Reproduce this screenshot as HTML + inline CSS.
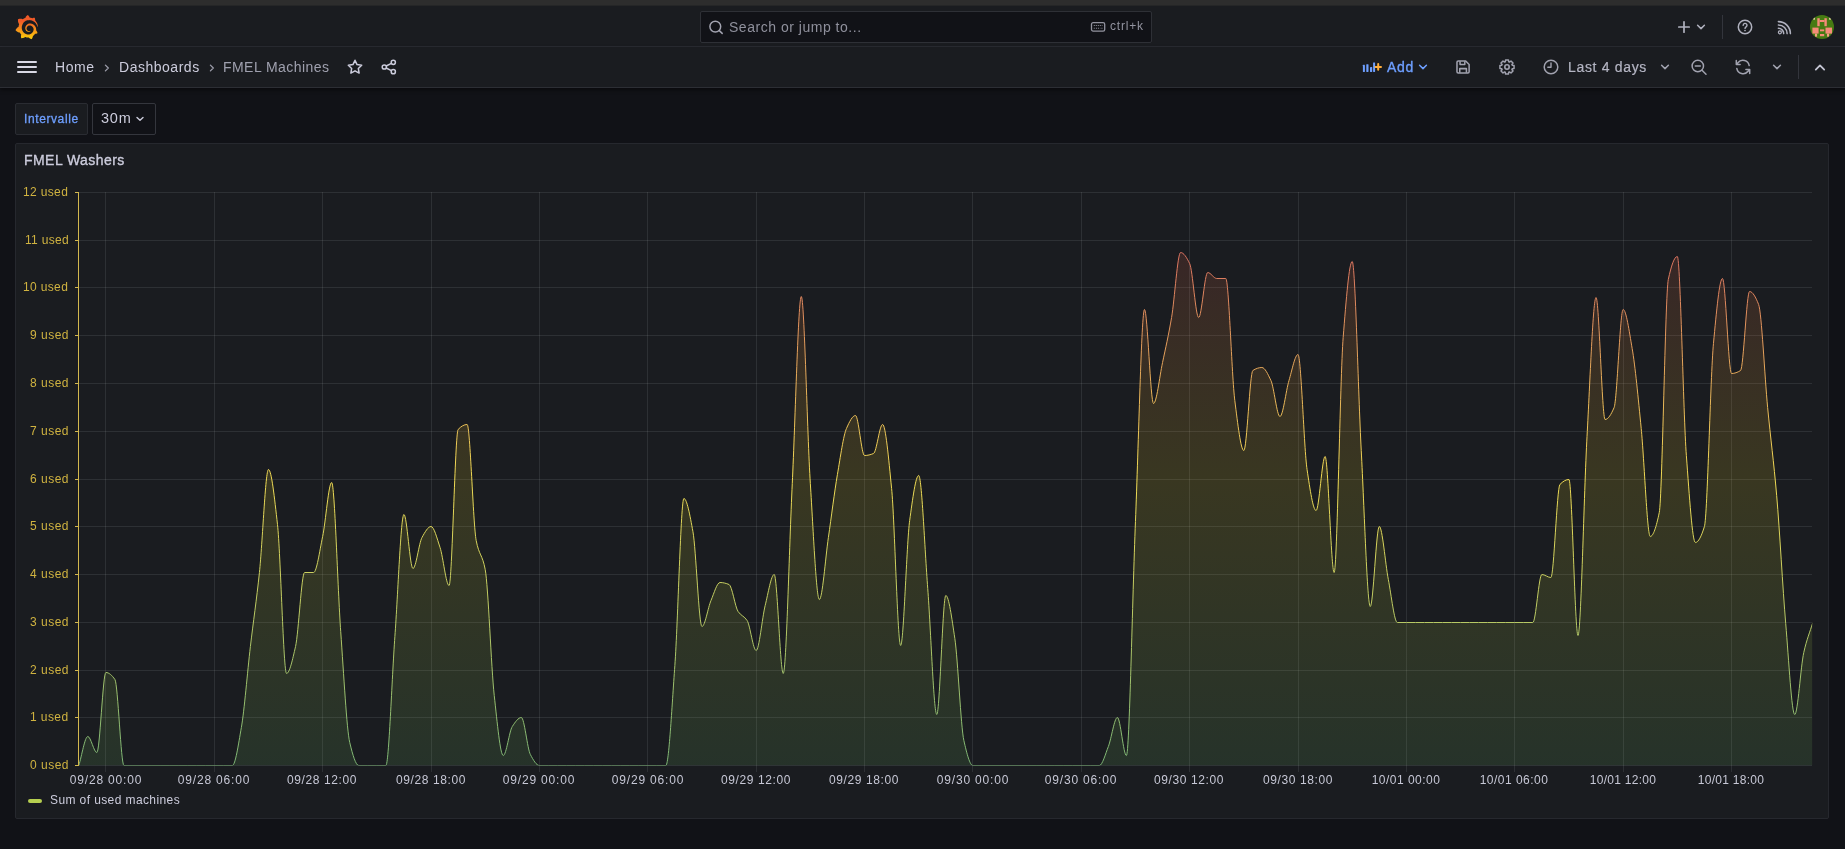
<!DOCTYPE html><html><head><meta charset="utf-8"><title>FMEL Machines - Dashboards - Grafana</title><style>
*{box-sizing:border-box;margin:0;padding:0}
html,body{width:1845px;height:849px;overflow:hidden;background:#111217;font-family:"Liberation Sans",sans-serif;color:#ccccdc}
.abs{position:absolute}
.t{position:absolute;white-space:nowrap;line-height:1;will-change:transform}
svg{position:absolute;overflow:visible}
.ic{fill:none;stroke:#ccccdc;stroke-width:1.6;stroke-linecap:round;stroke-linejoin:round}
</style></head><body>
<div class="abs" style="left:0;top:0;width:1845px;height:6px;background:#2d2d2d"></div>
<div class="abs" style="left:0;top:5px;width:1845px;height:1px;background:#252627"></div>
<div class="abs" style="left:0;top:6px;width:1845px;height:41px;background:#1a1c20;border-bottom:1px solid #2a2c32"></div>
<div class="abs" style="left:0;top:47px;width:1845px;height:41px;background:#1a1c20;border-bottom:1px solid #2c2e34;box-shadow:0 2px 4px rgba(0,0,0,.45)"></div>
<svg style="left:14.8px;top:14.7px" width="23.3" height="24.3" viewBox="0 0 351 365"><defs><linearGradient id="lg" x1="175.5" y1="445" x2="175.5" y2="90" gradientUnits="userSpaceOnUse"><stop offset="0" stop-color="#fff100"/><stop offset="1" stop-color="#f05a28"/></linearGradient></defs><path fill="url(#lg)" d="M342 161.200c-.600-6.100-1.600-13.100-3.600-20.900-2-7.700-5-16.200-9.400-25-4.400-8.800-10.100-17.900-17.500-26.800-2.900-3.500-6.100-6.900-9.500-10.200 5.100-20.300-6.200-37.900-6.200-37.900-19.500-1.200-31.900 6.100-36.500 9.400-.8-.3-1.500-.7-2.300-1-3.300-1.300-6.700-2.600-10.300-3.700-3.500-1.100-7.100-2.100-10.800-3-3.700-.9-7.400-1.600-11.200-2.200-.7-.1-1.300-.2-2-.3-8.500-27.200-32.900-38.600-32.900-38.600-27.300 17.300-32.400 41.500-32.400 41.500s-.1.500-.3 1.400c-1.500.4-3 .9-4.500 1.300-2.100.6-4.200 1.400-6.200 2.200-2.100.8-4.100 1.600-6.200 2.500-4.100 1.800-8.200 3.800-12.200 6-3.900 2.200-7.700 4.600-11.400 7.100-.5-.2-1-.4-1-.4-37.800-14.400-71.300 2.900-71.300 2.900-3.100 40.200 15.100 65.500 18.700 70.100-.9 2.500-1.700 5-2.500 7.500-2.800 9.100-4.900 18.400-6.200 28.100-.2 1.400-.4 2.800-.5 4.200C18.800 192.700 8.500 228 8.500 228c29.100 33.500 63.100 35.600 63.100 35.600 0 0 .1-.1.100-.1 4.300 7.700 9.300 15 14.900 21.900 2.400 2.900 4.800 5.600 7.400 8.300-10.600 30.400 1.500 55.600 1.500 55.600 32.400 1.200 53.700-14.200 58.200-17.700 3.200 1.100 6.500 2.100 9.800 2.900 10 2.600 20.200 4.100 30.400 4.500 2.500.1 5.100.2 7.600.1h1.200l.8 0 1.600 0 1.600-.1 0 .1c15.300 21.800 42.100 24.900 42.100 24.900 19.100-20.100 20.200-40.100 20.200-44.400l0 0c0 0 0-.1 0-.3 0-.4 0-.6 0-.6l0 0c0-.3 0-.6 0-.9 4-2.800 7.800-5.800 11.400-9.100 7.600-6.900 14.300-14.800 19.900-23.300.5-.8 1-1.600 1.500-2.400 21.600 1.200 36.900-13.400 36.900-13.400-3.600-22.500-16.400-33.500-19.100-35.600l0 0c0 0-.1-.1-.3-.2-.2-.1-.2-.2-.2-.2 0 0 0 0 0 0-.1-.1-.3-.2-.5-.3.100-1.400.2-2.700.3-4.100.2-2.400.2-4.900.2-7.300v-1.800l0-.9 0-.5c0-.6 0-.4 0-.6l-.1-1.500-.1-2c0-.7-.1-1.300-.2-1.900-.1-.6-.1-1.300-.2-1.900l-.2-1.900-.3-1.900c-.4-2.500-.8-4.900-1.400-7.400-2.300-9.700-6.100-18.900-11-27.200-5-8.300-11.200-15.600-18.300-21.800-7-6.200-14.900-11.200-23.100-14.900-8.300-3.700-16.900-6.100-25.500-7.200-4.300-.6-8.600-.8-12.900-.7l-1.600 0h-.4c-.1 0-.6 0-.5 0l-.7 0-1.600.1c-.6 0-1.200.1-1.700.1-2.200.2-4.400.5-6.500.9-8.600 1.600-16.700 4.700-23.800 9-7.100 4.300-13.300 9.600-18.300 15.600-5 6-8.900 12.700-11.600 19.600-2.700 6.900-4.200 14.100-4.600 21-.1 1.700-.1 3.500-.1 5.200 0 .4 0 .9 0 1.300l.1 1.400c.1.800.1 1.700.2 2.500.3 3.500 1 6.900 1.900 10.100 1.900 6.500 4.900 12.400 8.600 17.400 3.700 5 8.200 9.100 12.900 12.400 4.700 3.200 9.800 5.500 14.800 7 5 1.500 10 2.100 14.700 2.100.6 0 1.200 0 1.700 0 .3 0 .6 0 .9 0 .3 0 .6 0 .9-.1.5 0 1-.1 1.500-.1.1 0 .3 0 .4-.1l.5-.1c.3 0 .6-.1.900-.1.600-.1 1.100-.2 1.700-.3.600-.1 1.100-.2 1.600-.4 1.100-.2 2.100-.600 3.100-.9 2-.700 4-1.500 5.700-2.400 1.800-.9 3.400-2 5-3 .4-.3.900-.600 1.300-1 1.600-1.300 1.900-3.700.600-5.300-1.100-1.400-3.100-1.800-4.700-.9-.4.2-.8.400-1.200.6-1.400.7-2.800 1.300-4.300 1.800-1.500.5-3.100.9-4.700 1.200-.8.1-1.600.2-2.500.3-.4 0-.8.100-1.300.1-.4 0-.9 0-1.200 0-.4 0-.8 0-1.200 0-.5 0-1 0-1.500-.1 0 0-.3 0-.1 0l-.2 0-.3 0c-.2 0-.5 0-.7-.1-.5-.1-.9-.1-1.400-.2-3.700-.5-7.400-1.600-10.900-3.200-3.600-1.600-7-3.800-10.100-6.600-3.100-2.800-5.800-6.100-7.900-9.900-2.100-3.800-3.600-8-4.300-12.400-.3-2.200-.5-4.500-.4-6.700 0-.6.100-1.200.1-1.800 0 .2 0-.1 0-.1l0-.2 0-.5c0-.3.100-.6.100-.9.100-1.200.3-2.400.5-3.600 1.700-9.600 6.500-19 13.900-26.100 1.900-1.800 3.900-3.400 6-4.900 2.100-1.500 4.400-2.800 6.800-3.900 2.400-1.100 4.800-2 7.400-2.700 2.500-.7 5.100-1.100 7.800-1.400 1.300-.1 2.600-.2 4-.2.400 0 .6 0 .9 0l1.100 0 .7 0c.3 0 0 0 .1 0l.3 0 1.100.1c2.900.2 5.700.6 8.500 1.300 5.600 1.200 11.100 3.300 16.200 6.100 10.200 5.700 18.900 14.500 24.200 25.100 2.700 5.300 4.600 11 5.500 16.900.2 1.500.4 3 .5 4.500l.1 1.100.1 1.100c0 .4 0 .8 0 1.100 0 .4 0 .8 0 1.100v1l0 1.100c0 .7-.1 1.900-.1 2.600-.1 1.600-.3 3.300-.5 4.900-.2 1.600-.5 3.200-.8 4.800-.3 1.600-.7 3.200-1.100 4.700-.8 3.100-1.800 6.200-3 9.300-2.400 6-5.600 11.800-9.400 17.100-7.700 10.600-18.200 19.200-30.200 24.700-6 2.700-12.300 4.700-18.800 5.700-3.200.6-6.500.9-9.800 1l-.6 0h-.5l-1.100 0h-1.600-.8c.4 0-.1 0-.1 0l-.3 0c-1.800 0-3.500-.1-5.300-.3-7-.5-13.900-1.800-20.700-3.700-6.700-1.900-13.200-4.600-19.400-7.800-12.300-6.600-23.400-15.600-32-26.500-4.300-5.400-8.100-11.300-11.200-17.400-3.100-6.100-5.600-12.600-7.400-19.100-1.800-6.600-2.900-13.300-3.400-20.100l-.1-1.300 0-.3 0-.3 0-.6 0-1.100 0-.3 0-.4 0-.8 0-1.600 0-.3c0 0 0 .1 0-.1l0-.6c0-.8 0-1.700 0-2.500.1-3.300.4-6.800.8-10.200.4-3.400 1-6.900 1.700-10.300.7-3.400 1.500-6.800 2.500-10.200 1.900-6.700 4.300-13.200 7.100-19.300 5.700-12.200 13.100-23.100 22-31.800 2.200-2.200 4.500-4.200 6.900-6.200 2.400-1.900 4.900-3.700 7.500-5.400 2.500-1.700 5.200-3.200 7.900-4.600 1.300-.7 2.700-1.400 4.100-2 .7-.3 1.400-.6 2.100-.9.700-.3 1.400-.6 2.100-.9 2.800-1.200 5.700-2.200 8.700-3.100.7-.2 1.500-.4 2.200-.7.700-.2 1.500-.4 2.200-.6 1.500-.4 3-.8 4.500-1.100.7-.2 1.500-.3 2.300-.5.800-.2 1.500-.3 2.300-.5.800-.1 1.500-.3 2.300-.4l1.100-.2 1.200-.2c.8-.1 1.500-.2 2.300-.3.900-.1 1.700-.2 2.600-.3.700-.1 1.900-.2 2.600-.3.500-.1 1.100-.1 1.600-.2l1.100-.1.500-.1.600 0c.9-.1 1.700-.1 2.600-.2l1.300-.1c0 0 .5 0 .1 0l.3 0 .6 0c.7 0 1.500-.1 2.200-.1 2.900-.1 5.900-.1 8.800 0 5.800.2 11.500.9 17 1.900 11.100 2.100 21.500 5.600 31 10.300 9.500 4.600 17.900 10.300 25.300 16.500.5.400.9.800 1.400 1.200.4.400.9.800 1.300 1.200.9.800 1.700 1.600 2.600 2.400.9.800 1.700 1.600 2.500 2.400.8.800 1.600 1.600 2.400 2.500 3.100 3.300 6 6.600 8.600 10 5.200 6.700 9.400 13.500 12.700 19.900.2.400.4.800.6 1.200.2.400.4.800.6 1.200.4.800.8 1.600 1.100 2.400.4.800.7 1.500 1.100 2.300.3.800.7 1.500 1 2.300 1.200 3 2.400 5.900 3.300 8.600 1.500 4.400 2.600 8.300 3.500 11.700.3 1.400 1.600 2.300 3 2.100 1.500-.1 2.600-1.300 2.600-2.800C342.600 170.400 342.500 166.100 342 161.200z"/></svg>
<div class="abs" style="left:700px;top:11px;width:452px;height:32px;background:#111217;border:1px solid #2e3036;border-radius:2px"></div>
<svg style="left:708px;top:19px" width="16" height="16" viewBox="0 0 16 16"><circle cx="7.3" cy="7.6" r="5.4" fill="none" stroke="#a2a3b0" stroke-width="1.5"/><path d="M11.3 11.6L14.2 14.4" stroke="#a2a3b0" stroke-width="1.5" stroke-linecap="round"/></svg>
<div class="t" id="t_search" style="left:729.2px;top:19.6px;font-size:14px;color:#8f909c;letter-spacing:0.52px">Search or jump to...</div>
<svg style="left:1090px;top:21px" width="16" height="12" viewBox="0 0 16 12"><rect x="1.500" y="1.700" width="13.200" height="8.400" rx="1.600" fill="none" stroke="#92939f" stroke-width="1.3"/><path d="M3.800 4.500h8.600M3.800 7.300h.9M5.900 7.300h4.400M11.500 7.300h.9" stroke="#92939f" stroke-width="1.1" stroke-dasharray="1 1"/></svg>
<div class="t" id="t_ctrlk" style="left:1110.300px;top:20px;font-size:12px;color:#92939f;letter-spacing:0.8px">ctrl+k</div>
<svg style="left:1676px;top:19px" width="16" height="16" viewBox="0 0 16 16"><path d="M8 2.800v10.400M2.800 8h10.400" stroke="#b0b1be" stroke-width="1.7" stroke-linecap="round"/></svg>
<svg style="left:1696px;top:23px" width="10" height="8" viewBox="0 0 10 8"><path d="M1.6 2.2L5 5.6L8.4 2.2" fill="none" stroke="#b0b1be" stroke-width="1.5" stroke-linecap="round" stroke-linejoin="round"/></svg>
<div class="abs" style="left:1722px;top:15px;width:1px;height:24px;background:#33353c"></div>
<svg style="left:1736px;top:18px" width="18" height="18" viewBox="0 0 18 18"><circle cx="9" cy="9" r="6.7" fill="none" stroke="#b0b1be" stroke-width="1.5"/><path d="M7.2 7.4a1.9 1.9 0 1 1 2.9 1.5c-.7.45-1.05.8-1.05 1.5" fill="none" stroke="#b0b1be" stroke-width="1.4" stroke-linecap="round"/><circle cx="9" cy="12.5" r=".85" fill="#b0b1be"/></svg>
<svg style="left:1775px;top:19px" width="18" height="18" viewBox="1775 19 18 18"><circle cx="1779.900" cy="32.300" r="1.500" fill="none" stroke="#b0b1be" stroke-width="1.3"/><path d="M1778.4 28.300a5.300 5.300 0 0 1 5.300 5.300M1778.4 24.900a8.700 8.700 0 0 1 8.700 8.700M1778.4 21.600a12 12 0 0 1 12 12" fill="none" stroke="#b0b1be" stroke-width="1.55" stroke-linecap="round"/></svg>
<svg style="left:1810px;top:15px" width="24" height="24" viewBox="1810 15 24 24"><defs><clipPath id="avc"><circle cx="1822" cy="27" r="12"/></clipPath></defs><g clip-path="url(#avc)"><rect x="1810" y="15" width="24" height="24" fill="#467a12"/><rect x="1817.3" y="18.2" width="2.4" height="8.0" fill="#f58b78"/><rect x="1824.4" y="18.2" width="2.4" height="8.0" fill="#f58b78"/><rect x="1819.6" y="20.0" width="4.9" height="2.0" fill="#f58b78"/><rect x="1812.4" y="27.6" width="6.2" height="6.0" fill="#f58b78"/><rect x="1825.5" y="27.6" width="6.5" height="6.0" fill="#f58b78"/><rect x="1820.0" y="29.4" width="4.2" height="1.9" fill="#f58b78"/><rect x="1820.0" y="34.0" width="4.2" height="2.2" fill="#f58b78"/><rect x="1815.0" y="33.6" width="2.1" height="3.1" fill="#f2a080"/><rect x="1827.0" y="33.6" width="2.1" height="3.1" fill="#f2a080"/><rect x="1813.2" y="17.4" width="1.8" height="2.3" fill="#d8c89a"/><rect x="1829.0" y="17.4" width="2.0" height="2.3" fill="#d8c89a"/></g></svg>
<div class="abs" style="left:17px;top:61px;width:20px;height:2px;background:#d8d8e4;border-radius:1px"></div>
<div class="abs" style="left:17px;top:66px;width:20px;height:2px;background:#d8d8e4;border-radius:1px"></div>
<div class="abs" style="left:17px;top:71px;width:20px;height:2px;background:#d8d8e4;border-radius:1px"></div>
<div class="t" id="t_home" style="left:55px;top:60px;font-size:14px;color:#ccccdc;letter-spacing:0.6px">Home</div>
<svg style="left:103.3px;top:63.4px" width="8" height="10" viewBox="0 0 8 10"><path d="M2.4 2.100L5.300 5L2.4 7.900" fill="none" stroke="#9c9daa" stroke-width="1.3" stroke-linecap="round" stroke-linejoin="round"/></svg>
<div class="t" id="t_dash" style="left:119.2px;top:60px;font-size:14px;color:#ccccdc;letter-spacing:0.52px">Dashboards</div>
<svg style="left:208.3px;top:63.4px" width="8" height="10" viewBox="0 0 8 10"><path d="M2.4 2.100L5.300 5L2.4 7.900" fill="none" stroke="#9c9daa" stroke-width="1.3" stroke-linecap="round" stroke-linejoin="round"/></svg>
<div class="t" id="t_fmel" style="left:222.6px;top:60px;font-size:14px;color:#9fa0ae;letter-spacing:0.45px">FMEL Machines</div>
<svg style="left:346px;top:58px" width="18" height="18" viewBox="0 0 18 18"><path d="M9 2.300l2.050 4.250 4.650.65-3.380 3.250.82 4.600L9 12.850l-4.140 2.200.82-4.600L2.300 7.200l4.650-.65z" fill="none" stroke="#ccccdc" stroke-width="1.5" stroke-linejoin="round"/></svg>
<svg style="left:380px;top:58px" width="18" height="18" viewBox="0 0 18 18"><g fill="none" stroke="#ccccdc" stroke-width="1.5"><circle cx="13.3" cy="4.300" r="2.1"/><circle cx="4.300" cy="9" r="2.1"/><circle cx="13.3" cy="13.7" r="2.1"/><path d="M6.200 8l5.200-2.700M6.200 10l5.200 2.700"/></g></svg>
<svg style="left:1360px;top:60px" width="24" height="14" viewBox="1360 60 24 14"><g fill="#6e9fff"><rect x="1362.9" y="64.8" width="2" height="7.1" rx=".4"/><rect x="1366.300" y="64.300" width="2.2" height="7.6" rx=".4"/><rect x="1370" y="67.100" width="2.2" height="4.800" rx=".4"/><rect x="1373.100" y="62.4" width="2" height="9.5" rx=".4"/></g><path d="M1378.200 64.100v5.600M1375.400 66.900h5.600" stroke="#ffad3a" stroke-width="2" stroke-linecap="round"/></svg>
<div class="t" id="t_add" style="left:1386.6px;top:60px;font-size:14px;color:#6e9fff;-webkit-text-stroke:0.35px #6e9fff;letter-spacing:0.75px">Add</div>
<svg style="left:1418px;top:63px" width="10" height="8" viewBox="0 0 10 8"><path d="M1.6 2.2L5 5.6L8.4 2.2" fill="none" stroke="#6e9fff" stroke-width="1.5" stroke-linecap="round" stroke-linejoin="round"/></svg>
<svg style="left:1454.900px;top:59px" width="16.200" height="16.200" viewBox="0 0 18 18"><g fill="none" stroke="#a1a2af" stroke-width="1.7" stroke-linejoin="round"><path d="M3.600 2.300h8.300l3.800 3.800v8.100a1.400 1.400 0 0 1-1.400 1.400H3.600a1.400 1.400 0 0 1-1.400-1.400V3.700a1.400 1.400 0 0 1 1.400-1.400z"/><path d="M5.600 2.500v3.600h5.300V2.500M5.300 15.400v-4.700h7.400v4.700"/></g></svg>
<svg style="left:1498px;top:58px" width="18" height="18" viewBox="0 0 18 18"><path d="M16.06 7.57L16.06 10.43L14.22 10.73L13.92 11.47L15.00 12.98L12.98 15.00L11.47 13.92L10.73 14.22L10.43 16.06L7.57 16.06L7.27 14.22L6.53 13.92L5.02 15.00L3.00 12.98L4.08 11.47L3.78 10.73L1.94 10.43L1.94 7.57L3.78 7.27L4.08 6.53L3.00 5.02L5.02 3.00L6.53 4.08L7.27 3.78L7.57 1.94L10.43 1.94L10.73 3.78L11.47 4.08L12.98 3.00L15.00 5.02L13.92 6.53L14.22 7.27Z" fill="none" stroke="#a1a2af" stroke-width="1.5" stroke-linejoin="round"/><circle cx="9" cy="9" r="2.2" fill="none" stroke="#a1a2af" stroke-width="1.6"/></svg>
<svg style="left:1542px;top:58px" width="18" height="18" viewBox="0 0 18 18"><circle cx="9" cy="9" r="6.8" fill="none" stroke="#a1a2af" stroke-width="1.5"/><path d="M9 5v4.200H5.800" fill="none" stroke="#a1a2af" stroke-width="1.4" stroke-linecap="round" stroke-linejoin="round"/></svg>
<div class="t" id="t_last" style="left:1568px;top:60.3px;font-size:14px;color:#b4b5c3;-webkit-text-stroke:0.2px #b4b5c3;letter-spacing:0.67px">Last 4 days</div>
<svg style="left:1660px;top:63px" width="10" height="8" viewBox="0 0 10 8"><path d="M1.6 2.2L5 5.6L8.4 2.2" fill="none" stroke="#a1a2af" stroke-width="1.5" stroke-linecap="round" stroke-linejoin="round"/></svg>
<svg style="left:1690px;top:58px" width="18" height="18" viewBox="0 0 18 18"><circle cx="7.8" cy="8" r="5.7" fill="none" stroke="#a1a2af" stroke-width="1.5"/><path d="M5.300 8h5M12 12.200l4 4" fill="none" stroke="#a1a2af" stroke-width="1.5" stroke-linecap="round"/></svg>
<svg style="left:1734px;top:58px" width="18" height="18" viewBox="0 0 18 18"><g fill="none" stroke="#a1a2af" stroke-width="1.5" stroke-linecap="round" stroke-linejoin="round"><path d="M15.2 7.6A6.400 6.400 0 0 0 3.900 4.700L2.600 6.200M2.300 2.600v3.800h3.800"/><path d="M2.800 10.400a6.400 6.400 0 0 0 11.300 2.900l1.300-1.500M15.700 15.400v-3.800h-3.800"/></g></svg>
<svg style="left:1772px;top:63px" width="10" height="8" viewBox="0 0 10 8"><path d="M1.6 2.2L5 5.6L8.4 2.2" fill="none" stroke="#a1a2af" stroke-width="1.5" stroke-linecap="round" stroke-linejoin="round"/></svg>
<div class="abs" style="left:1798px;top:55px;width:1px;height:24px;background:#33353c"></div>
<svg style="left:1814px;top:63px" width="12" height="9" viewBox="0 0 12 9"><path d="M1.800 6.600L6 2.400L10.200 6.600" fill="none" stroke="#c4c5d3" stroke-width="1.8" stroke-linecap="round" stroke-linejoin="round"/></svg>
<div class="abs" style="left:15px;top:103px;width:73px;height:32px;background:#1a1c20;border:1px solid #2a2c32;border-radius:2px"></div>
<div class="t" id="t_interv" style="left:24px;top:113px;font-size:12px;color:#6e9fff;-webkit-text-stroke:0.3px #6e9fff;letter-spacing:0.6px">Intervalle</div>
<div class="abs" style="left:92px;top:103px;width:64px;height:32px;background:#111217;border:1px solid #34363d;border-radius:2px"></div>
<div class="t" id="t_30m" style="left:101.3px;top:111.3px;font-size:14.5px;color:#ccccdc;letter-spacing:0.75px">30m</div>
<svg style="left:135px;top:115px" width="10" height="8" viewBox="0 0 10 8"><path d="M2 2.400L5 5.300L8 2.400" fill="none" stroke="#ccccdc" stroke-width="1.4" stroke-linecap="round" stroke-linejoin="round"/></svg>
<div class="abs" style="left:15px;top:143px;width:1814px;height:676px;background:#1a1c20;border:1px solid #26282e;border-radius:2px"></div>
<div class="t" id="t_title" style="left:24px;top:153px;font-size:14px;color:#ccccdc;-webkit-text-stroke:0.35px #ccccdc;letter-spacing:0.45px">FMEL Washers</div>
<svg style="left:0;top:0" width="1845" height="849" viewBox="0 0 1845 849"><defs><linearGradient id="gl" gradientUnits="userSpaceOnUse" x1="0" y1="765.50" x2="0" y2="192.50"><stop offset="0" stop-color="#7eb776"/><stop offset="0.5" stop-color="#f0db54"/><stop offset="1" stop-color="#d55664"/></linearGradient><linearGradient id="gf" gradientUnits="userSpaceOnUse" x1="0" y1="765.50" x2="0" y2="192.50"><stop offset="0" stop-color="#73bf69" stop-opacity="0.14"/><stop offset="0.5" stop-color="#fade2a" stop-opacity="0.14"/><stop offset="1" stop-color="#f2495c" stop-opacity="0.14"/></linearGradient><clipPath id="plotclip"><rect x="78" y="180" width="1734.2" height="585.55"/></clipPath></defs><g stroke="rgba(240,250,255,0.09)" stroke-width="1" shape-rendering="crispEdges" fill="none"><path d="M79 765.5H1812"/><path d="M79 717.5H1812"/><path d="M79 670.5H1812"/><path d="M79 622.5H1812"/><path d="M79 574.5H1812"/><path d="M79 526.5H1812"/><path d="M79 479.5H1812"/><path d="M79 431.5H1812"/><path d="M79 383.5H1812"/><path d="M79 335.5H1812"/><path d="M79 287.5H1812"/><path d="M79 240.5H1812"/><path d="M79 192.5H1812"/><path d="M105.5 192V772"/><path d="M214.5 192V772"/><path d="M322.5 192V772"/><path d="M431.5 192V772"/><path d="M539.5 192V772"/><path d="M647.5 192V772"/><path d="M756.5 192V772"/><path d="M864.5 192V772"/><path d="M972.5 192V772"/><path d="M1081.5 192V772"/><path d="M1189.5 192V772"/><path d="M1298.5 192V772"/><path d="M1406.5 192V772"/><path d="M1514.5 192V772"/><path d="M1623.5 192V772"/><path d="M1731.5 192V772"/></g><g clip-path="url(#plotclip)"><path d="M78.80 765.50C81.81 755.83 84.82 736.50 87.83 736.50C90.84 736.50 93.85 752.50 96.86 752.50C99.87 752.50 102.88 672.50 105.89 672.50C108.90 672.50 111.91 675.18 114.92 679.50C117.94 683.82 120.95 765.50 123.96 765.50C126.97 765.50 129.98 765.50 132.99 765.50C136.00 765.50 139.01 765.50 142.02 765.50C145.03 765.50 148.04 765.50 151.05 765.50C154.06 765.50 157.07 765.50 160.08 765.50C163.09 765.50 166.10 765.50 169.11 765.50C172.12 765.50 175.13 765.50 178.14 765.50C181.15 765.50 184.16 765.50 187.18 765.50C190.19 765.50 193.20 765.50 196.21 765.50C199.22 765.50 202.23 765.50 205.24 765.50C208.25 765.50 211.26 765.50 214.27 765.50C217.28 765.50 220.29 765.50 223.30 765.50C226.31 765.50 229.32 765.50 232.33 765.50C235.34 765.50 238.35 744.74 241.36 727.50C244.37 710.26 247.38 672.28 250.39 646.50C253.40 620.72 256.41 601.21 259.43 572.50C262.44 543.79 265.45 469.50 268.46 469.50C271.47 469.50 274.48 497.72 277.49 524.50C280.50 551.28 283.51 673.50 286.52 673.50C289.53 673.50 292.54 659.69 295.55 646.50C298.56 633.31 301.57 572.50 304.58 572.50C307.59 572.50 310.60 572.50 313.61 572.50C316.62 572.50 319.63 550.90 322.64 536.50C325.65 522.10 328.66 482.50 331.68 482.50C334.69 482.50 337.70 589.09 340.71 631.50C343.72 673.91 346.73 729.80 349.74 742.50C352.75 755.20 355.76 765.50 358.77 765.50C361.78 765.50 364.79 765.50 367.80 765.50C370.81 765.50 373.82 765.50 376.83 765.50C379.84 765.50 382.85 765.50 385.86 765.50C388.87 765.50 391.88 678.30 394.89 636.50C397.90 594.70 400.91 514.50 403.93 514.50C406.94 514.50 409.95 568.50 412.96 568.50C415.97 568.50 418.98 542.91 421.99 537.50C425.00 532.09 428.01 526.50 431.02 526.50C434.03 526.50 437.04 538.48 440.05 547.50C443.06 556.52 446.07 585.50 449.08 585.50C452.09 585.50 455.10 432.73 458.11 429.50C461.12 426.27 464.13 424.50 467.14 424.50C470.15 424.50 473.16 525.03 476.18 540.50C479.19 555.97 482.20 553.78 485.21 569.50C488.22 585.22 491.23 668.40 494.24 695.50C497.25 722.60 500.26 755.50 503.27 755.50C506.28 755.50 509.29 731.08 512.30 726.50C515.31 721.92 518.32 717.50 521.33 717.50C524.34 717.50 527.35 748.85 530.36 754.50C533.37 760.15 536.38 765.50 539.39 765.50C542.40 765.50 545.41 765.50 548.42 765.50C551.44 765.50 554.45 765.50 557.46 765.50C560.47 765.50 563.48 765.50 566.49 765.50C569.50 765.50 572.51 765.50 575.52 765.50C578.53 765.50 581.54 765.50 584.55 765.50C587.56 765.50 590.57 765.50 593.58 765.50C596.59 765.50 599.60 765.50 602.61 765.50C605.62 765.50 608.63 765.50 611.64 765.50C614.65 765.50 617.66 765.50 620.67 765.50C623.69 765.50 626.70 765.50 629.71 765.50C632.72 765.50 635.73 765.50 638.74 765.50C641.75 765.50 644.76 765.50 647.77 765.50C650.78 765.50 653.79 765.50 656.80 765.50C659.81 765.50 662.82 765.50 665.83 765.50C668.84 765.50 671.85 707.20 674.86 665.50C677.87 623.80 680.88 498.50 683.89 498.50C686.90 498.50 689.91 515.17 692.92 531.50C695.94 547.83 698.95 626.50 701.96 626.50C704.97 626.50 707.98 607.59 710.99 600.50C714.00 593.41 717.01 582.50 720.02 582.50C723.03 582.50 726.04 583.26 729.05 584.50C732.06 585.74 735.07 607.00 738.08 611.50C741.09 616.00 744.10 615.88 747.11 620.50C750.12 625.12 753.13 650.50 756.14 650.50C759.15 650.50 762.16 617.74 765.17 605.50C768.19 593.26 771.20 574.50 774.21 574.50C777.22 574.50 780.23 673.50 783.24 673.50C786.25 673.50 789.26 546.33 792.27 483.50C795.28 420.67 798.29 296.50 801.30 296.50C804.31 296.50 807.32 435.77 810.33 483.50C813.34 531.23 816.35 599.50 819.36 599.50C822.37 599.50 825.38 558.33 828.39 537.50C831.40 516.67 834.41 492.22 837.42 474.50C840.44 456.78 843.45 435.26 846.46 428.50C849.47 421.74 852.48 415.50 855.49 415.50C858.50 415.50 861.51 455.50 864.52 455.50C867.53 455.50 870.54 454.75 873.55 453.50C876.56 452.25 879.57 424.50 882.58 424.50C885.59 424.50 888.60 458.19 891.61 488.50C894.62 518.81 897.63 645.50 900.64 645.50C903.65 645.50 906.66 542.56 909.67 520.50C912.69 498.44 915.70 475.50 918.71 475.50C921.72 475.50 924.73 548.78 927.74 588.50C930.75 628.22 933.76 714.50 936.77 714.50C939.78 714.50 942.79 595.50 945.80 595.50C948.81 595.50 951.82 618.33 954.83 638.50C957.84 658.67 960.85 727.11 963.86 740.50C966.87 753.89 969.88 765.50 972.89 765.50C975.90 765.50 978.91 765.50 981.92 765.50C984.94 765.50 987.95 765.50 990.96 765.50C993.97 765.50 996.98 765.50 999.99 765.50C1003.00 765.50 1006.01 765.50 1009.02 765.50C1012.03 765.50 1015.04 765.50 1018.05 765.50C1021.06 765.50 1024.07 765.50 1027.08 765.50C1030.09 765.50 1033.10 765.50 1036.11 765.50C1039.12 765.50 1042.13 765.50 1045.14 765.50C1048.15 765.50 1051.16 765.50 1054.17 765.50C1057.19 765.50 1060.20 765.50 1063.21 765.50C1066.22 765.50 1069.23 765.50 1072.24 765.50C1075.25 765.50 1078.26 765.50 1081.27 765.50C1084.28 765.50 1087.29 765.50 1090.30 765.50C1093.31 765.50 1096.32 765.50 1099.33 765.50C1102.34 765.50 1105.35 754.15 1108.36 746.50C1111.37 738.85 1114.38 717.50 1117.39 717.50C1120.40 717.50 1123.41 755.50 1126.42 755.50C1129.44 755.50 1132.45 595.65 1135.46 521.50C1138.47 447.35 1141.48 309.50 1144.49 309.50C1147.50 309.50 1150.51 403.50 1153.52 403.50C1156.53 403.50 1159.54 376.80 1162.55 362.50C1165.56 348.20 1168.57 335.23 1171.58 317.50C1174.59 299.77 1177.60 252.50 1180.61 252.50C1183.62 252.50 1186.63 257.41 1189.64 263.50C1192.65 269.59 1195.66 317.50 1198.67 317.50C1201.69 317.50 1204.70 272.50 1207.71 272.50C1210.72 272.50 1213.73 278.50 1216.74 278.50C1219.75 278.50 1222.76 278.50 1225.77 278.50C1228.78 278.50 1231.79 376.86 1234.80 400.50C1237.81 424.14 1240.82 450.50 1243.83 450.50C1246.84 450.50 1249.85 372.43 1252.86 370.50C1255.87 368.57 1258.88 367.50 1261.89 367.50C1264.90 367.50 1267.91 374.13 1270.92 380.50C1273.94 386.87 1276.95 416.50 1279.96 416.50C1282.97 416.50 1285.98 390.56 1288.99 380.50C1292.00 370.44 1295.01 354.50 1298.02 354.50C1301.03 354.50 1304.04 449.35 1307.05 469.50C1310.06 489.65 1313.07 510.50 1316.08 510.50C1319.09 510.50 1322.10 456.50 1325.11 456.50C1328.12 456.50 1331.13 572.50 1334.14 572.50C1337.15 572.50 1340.16 375.79 1343.17 337.50C1346.19 299.21 1349.20 261.50 1352.21 261.50C1355.22 261.50 1358.23 393.53 1361.24 450.50C1364.25 507.47 1367.26 606.50 1370.27 606.50C1373.28 606.50 1376.29 526.50 1379.30 526.50C1382.31 526.50 1385.32 563.67 1388.33 579.50C1391.34 595.33 1394.35 622.50 1397.36 622.50C1400.37 622.50 1403.38 622.50 1406.39 622.50C1409.40 622.50 1412.41 622.50 1415.42 622.50C1418.44 622.50 1421.45 622.50 1424.46 622.50C1427.47 622.50 1430.48 622.50 1433.49 622.50C1436.50 622.50 1439.51 622.50 1442.52 622.50C1445.53 622.50 1448.54 622.50 1451.55 622.50C1454.56 622.50 1457.57 622.50 1460.58 622.50C1463.59 622.50 1466.60 622.50 1469.61 622.50C1472.62 622.50 1475.63 622.50 1478.64 622.50C1481.65 622.50 1484.66 622.50 1487.67 622.50C1490.69 622.50 1493.70 622.50 1496.71 622.50C1499.72 622.50 1502.73 622.50 1505.74 622.50C1508.75 622.50 1511.76 622.50 1514.77 622.50C1517.78 622.50 1520.79 622.50 1523.80 622.50C1526.81 622.50 1529.82 622.50 1532.83 622.50C1535.84 622.50 1538.85 574.50 1541.86 574.50C1544.87 574.50 1547.88 577.50 1550.89 577.50C1553.90 577.50 1556.91 487.66 1559.92 484.50C1562.94 481.34 1565.95 479.50 1568.96 479.50C1571.97 479.50 1574.98 635.50 1577.99 635.50C1581.00 635.50 1584.01 491.06 1587.02 436.50C1590.03 381.94 1593.04 297.50 1596.05 297.50C1599.06 297.50 1602.07 419.50 1605.08 419.50C1608.09 419.50 1611.10 414.63 1614.11 407.50C1617.12 400.37 1620.13 309.50 1623.14 309.50C1626.15 309.50 1629.16 331.02 1632.17 348.50C1635.19 365.98 1638.20 397.86 1641.21 428.50C1644.22 459.14 1647.23 536.50 1650.24 536.50C1653.25 536.50 1656.26 527.01 1659.27 512.50C1662.28 497.99 1665.29 293.46 1668.30 279.50C1671.31 265.54 1674.32 256.50 1677.33 256.50C1680.34 256.50 1683.35 415.14 1686.36 455.50C1689.37 495.86 1692.38 542.50 1695.39 542.50C1698.40 542.50 1701.41 536.31 1704.42 526.50C1707.44 516.69 1710.45 375.48 1713.46 343.50C1716.47 311.52 1719.48 278.50 1722.49 278.50C1725.50 278.50 1728.51 373.50 1731.52 373.50C1734.53 373.50 1737.54 372.43 1740.55 370.50C1743.56 368.57 1746.57 291.50 1749.58 291.50C1752.59 291.50 1755.60 296.80 1758.61 304.50C1761.62 312.20 1764.63 375.86 1767.64 407.50C1770.65 439.14 1773.66 460.73 1776.67 495.50C1779.69 530.27 1782.70 588.04 1785.71 623.50C1788.72 658.96 1791.73 714.50 1794.74 714.50C1797.75 714.50 1800.76 665.98 1803.77 652.50C1806.78 639.02 1809.79 632.50 1812.80 622.50L1812.80 765.50 L78.80 765.50 Z" fill="url(#gf)" stroke="none"/><path d="M78.80 765.50C81.81 755.83 84.82 736.50 87.83 736.50C90.84 736.50 93.85 752.50 96.86 752.50C99.87 752.50 102.88 672.50 105.89 672.50C108.90 672.50 111.91 675.18 114.92 679.50C117.94 683.82 120.95 765.50 123.96 765.50C126.97 765.50 129.98 765.50 132.99 765.50C136.00 765.50 139.01 765.50 142.02 765.50C145.03 765.50 148.04 765.50 151.05 765.50C154.06 765.50 157.07 765.50 160.08 765.50C163.09 765.50 166.10 765.50 169.11 765.50C172.12 765.50 175.13 765.50 178.14 765.50C181.15 765.50 184.16 765.50 187.18 765.50C190.19 765.50 193.20 765.50 196.21 765.50C199.22 765.50 202.23 765.50 205.24 765.50C208.25 765.50 211.26 765.50 214.27 765.50C217.28 765.50 220.29 765.50 223.30 765.50C226.31 765.50 229.32 765.50 232.33 765.50C235.34 765.50 238.35 744.74 241.36 727.50C244.37 710.26 247.38 672.28 250.39 646.50C253.40 620.72 256.41 601.21 259.43 572.50C262.44 543.79 265.45 469.50 268.46 469.50C271.47 469.50 274.48 497.72 277.49 524.50C280.50 551.28 283.51 673.50 286.52 673.50C289.53 673.50 292.54 659.69 295.55 646.50C298.56 633.31 301.57 572.50 304.58 572.50C307.59 572.50 310.60 572.50 313.61 572.50C316.62 572.50 319.63 550.90 322.64 536.50C325.65 522.10 328.66 482.50 331.68 482.50C334.69 482.50 337.70 589.09 340.71 631.50C343.72 673.91 346.73 729.80 349.74 742.50C352.75 755.20 355.76 765.50 358.77 765.50C361.78 765.50 364.79 765.50 367.80 765.50C370.81 765.50 373.82 765.50 376.83 765.50C379.84 765.50 382.85 765.50 385.86 765.50C388.87 765.50 391.88 678.30 394.89 636.50C397.90 594.70 400.91 514.50 403.93 514.50C406.94 514.50 409.95 568.50 412.96 568.50C415.97 568.50 418.98 542.91 421.99 537.50C425.00 532.09 428.01 526.50 431.02 526.50C434.03 526.50 437.04 538.48 440.05 547.50C443.06 556.52 446.07 585.50 449.08 585.50C452.09 585.50 455.10 432.73 458.11 429.50C461.12 426.27 464.13 424.50 467.14 424.50C470.15 424.50 473.16 525.03 476.18 540.50C479.19 555.97 482.20 553.78 485.21 569.50C488.22 585.22 491.23 668.40 494.24 695.50C497.25 722.60 500.26 755.50 503.27 755.50C506.28 755.50 509.29 731.08 512.30 726.50C515.31 721.92 518.32 717.50 521.33 717.50C524.34 717.50 527.35 748.85 530.36 754.50C533.37 760.15 536.38 765.50 539.39 765.50C542.40 765.50 545.41 765.50 548.42 765.50C551.44 765.50 554.45 765.50 557.46 765.50C560.47 765.50 563.48 765.50 566.49 765.50C569.50 765.50 572.51 765.50 575.52 765.50C578.53 765.50 581.54 765.50 584.55 765.50C587.56 765.50 590.57 765.50 593.58 765.50C596.59 765.50 599.60 765.50 602.61 765.50C605.62 765.50 608.63 765.50 611.64 765.50C614.65 765.50 617.66 765.50 620.67 765.50C623.69 765.50 626.70 765.50 629.71 765.50C632.72 765.50 635.73 765.50 638.74 765.50C641.75 765.50 644.76 765.50 647.77 765.50C650.78 765.50 653.79 765.50 656.80 765.50C659.81 765.50 662.82 765.50 665.83 765.50C668.84 765.50 671.85 707.20 674.86 665.50C677.87 623.80 680.88 498.50 683.89 498.50C686.90 498.50 689.91 515.17 692.92 531.50C695.94 547.83 698.95 626.50 701.96 626.50C704.97 626.50 707.98 607.59 710.99 600.50C714.00 593.41 717.01 582.50 720.02 582.50C723.03 582.50 726.04 583.26 729.05 584.50C732.06 585.74 735.07 607.00 738.08 611.50C741.09 616.00 744.10 615.88 747.11 620.50C750.12 625.12 753.13 650.50 756.14 650.50C759.15 650.50 762.16 617.74 765.17 605.50C768.19 593.26 771.20 574.50 774.21 574.50C777.22 574.50 780.23 673.50 783.24 673.50C786.25 673.50 789.26 546.33 792.27 483.50C795.28 420.67 798.29 296.50 801.30 296.50C804.31 296.50 807.32 435.77 810.33 483.50C813.34 531.23 816.35 599.50 819.36 599.50C822.37 599.50 825.38 558.33 828.39 537.50C831.40 516.67 834.41 492.22 837.42 474.50C840.44 456.78 843.45 435.26 846.46 428.50C849.47 421.74 852.48 415.50 855.49 415.50C858.50 415.50 861.51 455.50 864.52 455.50C867.53 455.50 870.54 454.75 873.55 453.50C876.56 452.25 879.57 424.50 882.58 424.50C885.59 424.50 888.60 458.19 891.61 488.50C894.62 518.81 897.63 645.50 900.64 645.50C903.65 645.50 906.66 542.56 909.67 520.50C912.69 498.44 915.70 475.50 918.71 475.50C921.72 475.50 924.73 548.78 927.74 588.50C930.75 628.22 933.76 714.50 936.77 714.50C939.78 714.50 942.79 595.50 945.80 595.50C948.81 595.50 951.82 618.33 954.83 638.50C957.84 658.67 960.85 727.11 963.86 740.50C966.87 753.89 969.88 765.50 972.89 765.50C975.90 765.50 978.91 765.50 981.92 765.50C984.94 765.50 987.95 765.50 990.96 765.50C993.97 765.50 996.98 765.50 999.99 765.50C1003.00 765.50 1006.01 765.50 1009.02 765.50C1012.03 765.50 1015.04 765.50 1018.05 765.50C1021.06 765.50 1024.07 765.50 1027.08 765.50C1030.09 765.50 1033.10 765.50 1036.11 765.50C1039.12 765.50 1042.13 765.50 1045.14 765.50C1048.15 765.50 1051.16 765.50 1054.17 765.50C1057.19 765.50 1060.20 765.50 1063.21 765.50C1066.22 765.50 1069.23 765.50 1072.24 765.50C1075.25 765.50 1078.26 765.50 1081.27 765.50C1084.28 765.50 1087.29 765.50 1090.30 765.50C1093.31 765.50 1096.32 765.50 1099.33 765.50C1102.34 765.50 1105.35 754.15 1108.36 746.50C1111.37 738.85 1114.38 717.50 1117.39 717.50C1120.40 717.50 1123.41 755.50 1126.42 755.50C1129.44 755.50 1132.45 595.65 1135.46 521.50C1138.47 447.35 1141.48 309.50 1144.49 309.50C1147.50 309.50 1150.51 403.50 1153.52 403.50C1156.53 403.50 1159.54 376.80 1162.55 362.50C1165.56 348.20 1168.57 335.23 1171.58 317.50C1174.59 299.77 1177.60 252.50 1180.61 252.50C1183.62 252.50 1186.63 257.41 1189.64 263.50C1192.65 269.59 1195.66 317.50 1198.67 317.50C1201.69 317.50 1204.70 272.50 1207.71 272.50C1210.72 272.50 1213.73 278.50 1216.74 278.50C1219.75 278.50 1222.76 278.50 1225.77 278.50C1228.78 278.50 1231.79 376.86 1234.80 400.50C1237.81 424.14 1240.82 450.50 1243.83 450.50C1246.84 450.50 1249.85 372.43 1252.86 370.50C1255.87 368.57 1258.88 367.50 1261.89 367.50C1264.90 367.50 1267.91 374.13 1270.92 380.50C1273.94 386.87 1276.95 416.50 1279.96 416.50C1282.97 416.50 1285.98 390.56 1288.99 380.50C1292.00 370.44 1295.01 354.50 1298.02 354.50C1301.03 354.50 1304.04 449.35 1307.05 469.50C1310.06 489.65 1313.07 510.50 1316.08 510.50C1319.09 510.50 1322.10 456.50 1325.11 456.50C1328.12 456.50 1331.13 572.50 1334.14 572.50C1337.15 572.50 1340.16 375.79 1343.17 337.50C1346.19 299.21 1349.20 261.50 1352.21 261.50C1355.22 261.50 1358.23 393.53 1361.24 450.50C1364.25 507.47 1367.26 606.50 1370.27 606.50C1373.28 606.50 1376.29 526.50 1379.30 526.50C1382.31 526.50 1385.32 563.67 1388.33 579.50C1391.34 595.33 1394.35 622.50 1397.36 622.50C1400.37 622.50 1403.38 622.50 1406.39 622.50C1409.40 622.50 1412.41 622.50 1415.42 622.50C1418.44 622.50 1421.45 622.50 1424.46 622.50C1427.47 622.50 1430.48 622.50 1433.49 622.50C1436.50 622.50 1439.51 622.50 1442.52 622.50C1445.53 622.50 1448.54 622.50 1451.55 622.50C1454.56 622.50 1457.57 622.50 1460.58 622.50C1463.59 622.50 1466.60 622.50 1469.61 622.50C1472.62 622.50 1475.63 622.50 1478.64 622.50C1481.65 622.50 1484.66 622.50 1487.67 622.50C1490.69 622.50 1493.70 622.50 1496.71 622.50C1499.72 622.50 1502.73 622.50 1505.74 622.50C1508.75 622.50 1511.76 622.50 1514.77 622.50C1517.78 622.50 1520.79 622.50 1523.80 622.50C1526.81 622.50 1529.82 622.50 1532.83 622.50C1535.84 622.50 1538.85 574.50 1541.86 574.50C1544.87 574.50 1547.88 577.50 1550.89 577.50C1553.90 577.50 1556.91 487.66 1559.92 484.50C1562.94 481.34 1565.95 479.50 1568.96 479.50C1571.97 479.50 1574.98 635.50 1577.99 635.50C1581.00 635.50 1584.01 491.06 1587.02 436.50C1590.03 381.94 1593.04 297.50 1596.05 297.50C1599.06 297.50 1602.07 419.50 1605.08 419.50C1608.09 419.50 1611.10 414.63 1614.11 407.50C1617.12 400.37 1620.13 309.50 1623.14 309.50C1626.15 309.50 1629.16 331.02 1632.17 348.50C1635.19 365.98 1638.20 397.86 1641.21 428.50C1644.22 459.14 1647.23 536.50 1650.24 536.50C1653.25 536.50 1656.26 527.01 1659.27 512.50C1662.28 497.99 1665.29 293.46 1668.30 279.50C1671.31 265.54 1674.32 256.50 1677.33 256.50C1680.34 256.50 1683.35 415.14 1686.36 455.50C1689.37 495.86 1692.38 542.50 1695.39 542.50C1698.40 542.50 1701.41 536.31 1704.42 526.50C1707.44 516.69 1710.45 375.48 1713.46 343.50C1716.47 311.52 1719.48 278.50 1722.49 278.50C1725.50 278.50 1728.51 373.50 1731.52 373.50C1734.53 373.50 1737.54 372.43 1740.55 370.50C1743.56 368.57 1746.57 291.50 1749.58 291.50C1752.59 291.50 1755.60 296.80 1758.61 304.50C1761.62 312.20 1764.63 375.86 1767.64 407.50C1770.65 439.14 1773.66 460.73 1776.67 495.50C1779.69 530.27 1782.70 588.04 1785.71 623.50C1788.72 658.96 1791.73 714.50 1794.74 714.50C1797.75 714.50 1800.76 665.98 1803.77 652.50C1806.78 639.02 1809.79 632.50 1812.80 622.50" fill="none" stroke="url(#gl)" stroke-width="1" stroke-linejoin="round"/></g><path d="M78.500 192V766" stroke="#d3b84e" stroke-width="1" shape-rendering="crispEdges"/><g stroke="#d3b84e" stroke-width="1" shape-rendering="crispEdges"><path d="M75 765.5H78"/><path d="M75 717.5H78"/><path d="M75 670.5H78"/><path d="M75 622.5H78"/><path d="M75 574.5H78"/><path d="M75 526.5H78"/><path d="M75 479.5H78"/><path d="M75 431.5H78"/><path d="M75 383.5H78"/><path d="M75 335.5H78"/><path d="M75 287.5H78"/><path d="M75 240.5H78"/><path d="M75 192.5H78"/></g></svg>
<div class="t yl" style="right:1775.9px;top:759.0px;font-size:12px;color:#d0b340;letter-spacing:0.50px">0 used</div>
<div class="t yl" style="right:1776.8px;top:711.0px;font-size:12px;color:#d0b340;letter-spacing:0.42px">1 used</div>
<div class="t yl" style="right:1775.9px;top:664.0px;font-size:12px;color:#d0b340;letter-spacing:0.50px">2 used</div>
<div class="t yl" style="right:1775.9px;top:616.0px;font-size:12px;color:#d0b340;letter-spacing:0.50px">3 used</div>
<div class="t yl" style="right:1775.9px;top:568.0px;font-size:12px;color:#d0b340;letter-spacing:0.50px">4 used</div>
<div class="t yl" style="right:1775.9px;top:520.0px;font-size:12px;color:#d0b340;letter-spacing:0.50px">5 used</div>
<div class="t yl" style="right:1775.9px;top:473.0px;font-size:12px;color:#d0b340;letter-spacing:0.50px">6 used</div>
<div class="t yl" style="right:1775.9px;top:425.0px;font-size:12px;color:#d0b340;letter-spacing:0.50px">7 used</div>
<div class="t yl" style="right:1775.9px;top:377.0px;font-size:12px;color:#d0b340;letter-spacing:0.50px">8 used</div>
<div class="t yl" style="right:1775.9px;top:329.0px;font-size:12px;color:#d0b340;letter-spacing:0.50px">9 used</div>
<div class="t yl" style="right:1776.8px;top:281.0px;font-size:12px;color:#d0b340;letter-spacing:0.35px">10 used</div>
<div class="t yl" style="right:1775.8px;top:234.0px;font-size:12px;color:#d0b340;letter-spacing:0.30px">11 used</div>
<div class="t yl" style="right:1776.8px;top:186.0px;font-size:12px;color:#d0b340;letter-spacing:0.35px">12 used</div>
<div class="t xl" style="left:45.6px;top:773.5px;width:120px;text-align:center;font-size:12px;color:#c7c8d6;letter-spacing:0.83px">09/28 00:00</div>
<div class="t xl" style="left:154.0px;top:773.5px;width:120px;text-align:center;font-size:12px;color:#c7c8d6;letter-spacing:0.83px">09/28 06:00</div>
<div class="t xl" style="left:262.3px;top:773.5px;width:120px;text-align:center;font-size:12px;color:#c7c8d6;letter-spacing:0.61px">09/28 12:00</div>
<div class="t xl" style="left:370.6px;top:773.5px;width:120px;text-align:center;font-size:12px;color:#c7c8d6;letter-spacing:0.61px">09/28 18:00</div>
<div class="t xl" style="left:479.1px;top:773.5px;width:120px;text-align:center;font-size:12px;color:#c7c8d6;letter-spacing:0.83px">09/29 00:00</div>
<div class="t xl" style="left:587.5px;top:773.5px;width:120px;text-align:center;font-size:12px;color:#c7c8d6;letter-spacing:0.83px">09/29 06:00</div>
<div class="t xl" style="left:695.8px;top:773.5px;width:120px;text-align:center;font-size:12px;color:#c7c8d6;letter-spacing:0.61px">09/29 12:00</div>
<div class="t xl" style="left:804.1px;top:773.5px;width:120px;text-align:center;font-size:12px;color:#c7c8d6;letter-spacing:0.61px">09/29 18:00</div>
<div class="t xl" style="left:912.6px;top:773.5px;width:120px;text-align:center;font-size:12px;color:#c7c8d6;letter-spacing:0.83px">09/30 00:00</div>
<div class="t xl" style="left:1021.0px;top:773.5px;width:120px;text-align:center;font-size:12px;color:#c7c8d6;letter-spacing:0.83px">09/30 06:00</div>
<div class="t xl" style="left:1129.3px;top:773.5px;width:120px;text-align:center;font-size:12px;color:#c7c8d6;letter-spacing:0.61px">09/30 12:00</div>
<div class="t xl" style="left:1237.6px;top:773.5px;width:120px;text-align:center;font-size:12px;color:#c7c8d6;letter-spacing:0.61px">09/30 18:00</div>
<div class="t xl" style="left:1345.9px;top:773.5px;width:120px;text-align:center;font-size:12px;color:#c7c8d6;letter-spacing:0.48px">10/01 00:00</div>
<div class="t xl" style="left:1454.3px;top:773.5px;width:120px;text-align:center;font-size:12px;color:#c7c8d6;letter-spacing:0.48px">10/01 06:00</div>
<div class="t xl" style="left:1562.6px;top:773.5px;width:120px;text-align:center;font-size:12px;color:#c7c8d6;letter-spacing:0.26px">10/01 12:00</div>
<div class="t xl" style="left:1671.0px;top:773.5px;width:120px;text-align:center;font-size:12px;color:#c7c8d6;letter-spacing:0.26px">10/01 18:00</div>
<div class="abs" style="left:28px;top:799px;width:14px;height:4px;border-radius:2px;background:#b6cf50"></div>
<div class="t" id="t_leg" style="left:50.3px;top:794px;font-size:12px;color:#ccccdc;letter-spacing:0.4px">Sum of used machines</div>
</body></html>
